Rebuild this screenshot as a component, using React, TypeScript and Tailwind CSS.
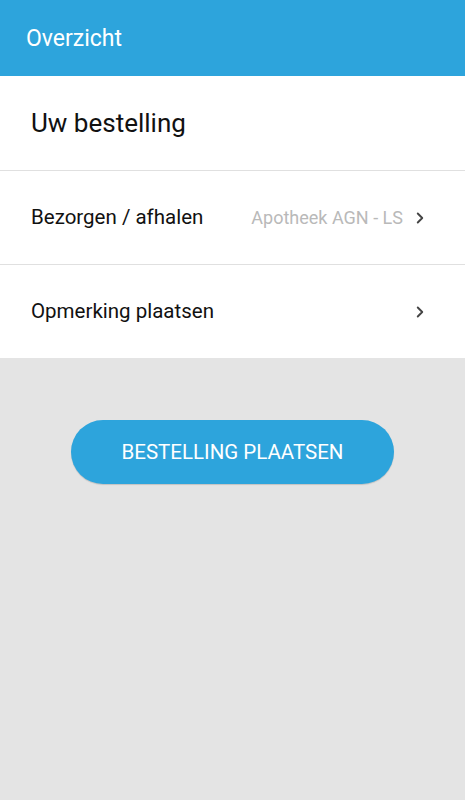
import { ChevronRight } from "lucide-react";

function Row({ label, value }: { label: string; value?: string }) {
  return (
    <div className="flex h-[93px] items-center bg-white pl-[31px] pr-[36px]">
      <span className="flex-1 text-[20.5px] text-[#111]">{label}</span>
      {value && <span className="mr-[8px] text-[18px] text-[#b9b9b9]">{value}</span>}
      <ChevronRight className="h-[18px] w-[18px] text-[#444]" strokeWidth={2.5} />
    </div>
  );
}

export default function App() {
  return (
    <div className="flex h-[800px] w-[465px] flex-col bg-[#e4e4e4] font-['Roboto',sans-serif]">
      <header className="flex h-[76px] items-center bg-[#2da4dc] px-[26px] pt-[2px]">
        <h1 className="text-[23px] text-white">Overzicht</h1>
      </header>
      <div className="flex h-[94px] items-center bg-white pl-[31px]">
        <h2 className="text-[26px] text-[#111]">Uw bestelling</h2>
      </div>
      <div className="h-px bg-[#e0e0e0]" />
      <Row label="Bezorgen / afhalen" value="Apotheek AGN - LS" />
      <div className="h-px bg-[#e0e0e0]" />
      <Row label="Opmerking plaatsen" />
      <div className="flex justify-center pt-[62px]">
        <button className="h-[64px] w-[323px] rounded-full bg-[#2da4dc] text-[20.5px] text-white shadow-[0_1px_1px_rgba(0,0,0,0.15)]">
          BESTELLING PLAATSEN
        </button>
      </div>
    </div>
  );
}
